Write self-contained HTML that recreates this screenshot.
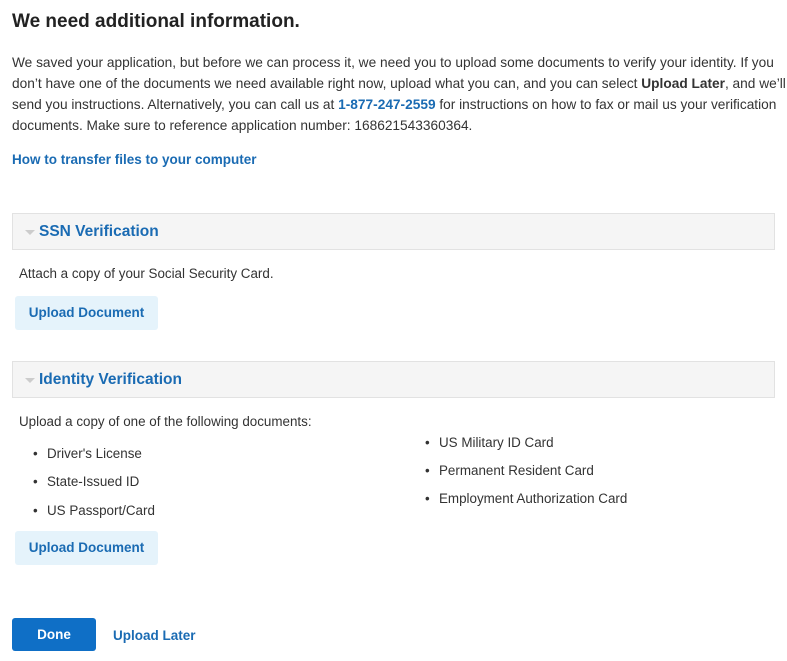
<!DOCTYPE html><html><head><style>
body{margin:0;width:787px;height:661px;background:#fff;font-family:"Liberation Sans",sans-serif;color:#333;position:relative;overflow:hidden}
.a{position:absolute;white-space:nowrap}
h1{position:absolute;left:12px;top:11px;margin:0;font-size:19px;font-weight:bold;color:#222}
p{position:absolute;left:12px;top:52px;margin:0;font-size:13.7px;line-height:21px;width:790px;color:#333;white-space:nowrap}
b.l{color:#1a6bb3}
.lnk{color:#1a6bb3;font-weight:bold;font-size:13.5px}
.pan{position:absolute;left:12px;width:761px;height:35px;background:#f5f5f5;border:1px solid #e2e2e2}
.pan span{position:absolute;left:26px;top:9px;font-size:15.5px;font-weight:bold;color:#1a6bb3}
.pan i{position:absolute;left:12px;top:16px;border:5px solid transparent;border-top:5px solid #ccc}
.btn{position:absolute;left:15px;width:143px;height:34px;background:#e5f3fb;border-radius:3px;color:#1a6bb3;font-weight:bold;font-size:13.5px;line-height:34px;text-align:center}
.t{font-size:13.4px;color:#333}
.li::before{content:"•";position:absolute;left:-14px}
</style></head><body>
<h1>We need additional information.</h1>
<p>We saved your application, but before we can process it, we need you to upload some documents to verify your identity. If you<br>don’t have one of the documents we need available right now, upload what you can, and you can select <b>Upload Later</b>, and we’ll<br>send you instructions. Alternatively, you can call us at <b class="l">1-877-247-2559</b> for instructions on how to fax or mail us your verification<br>documents. Make sure to reference application number: 168621543360364.</p>
<div class="a lnk" style="left:12px;top:152px">How to transfer files to your computer</div>
<div class="pan" style="top:213px"><i></i><span>SSN Verification</span></div>
<div class="a t" style="left:19px;top:266px">Attach a copy of your Social Security Card.</div>
<div class="btn" style="top:296px">Upload Document</div>
<div class="pan" style="top:361px"><i></i><span>Identity Verification</span></div>
<div class="a t" style="left:19px;top:414px">Upload a copy of one of the following documents:</div>
<div class="a t li" style="left:47px;top:446px">Driver's License</div>
<div class="a t li" style="left:47px;top:474px">State-Issued ID</div>
<div class="a t li" style="left:47px;top:503px">US Passport/Card</div>
<div class="a t li" style="left:439px;top:435px">US Military ID Card</div>
<div class="a t li" style="left:439px;top:463px">Permanent Resident Card</div>
<div class="a t li" style="left:439px;top:491px">Employment Authorization Card</div>
<div class="btn" style="top:531px">Upload Document</div>
<div class="a" style="left:12px;top:618px;width:84px;height:33px;background:#0f6fc6;border-radius:3px;color:#fff;font-weight:bold;font-size:13.5px;line-height:33px;text-align:center">Done</div>
<div class="a lnk" style="left:113px;top:628px">Upload Later</div>
</body></html>
